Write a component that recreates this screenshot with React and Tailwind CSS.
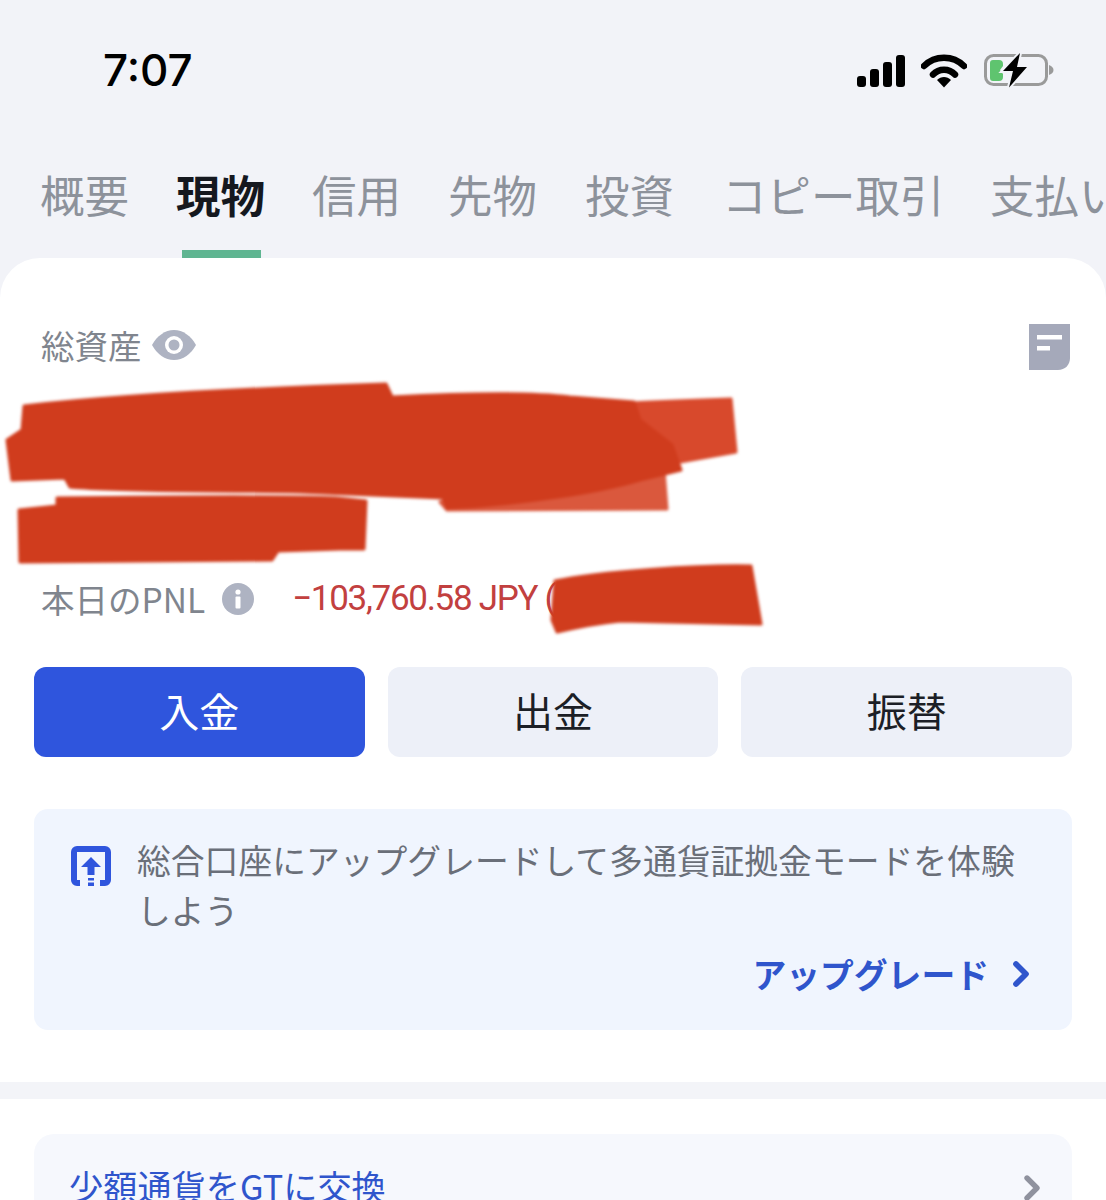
import { ChevronRight } from 'lucide-react';

const cjk = { fontFamily: '"Noto Sans CJK JP", "Noto Sans", sans-serif' };

const tabs = [
  { label: '概要', width: 'w-[88px]' },
  { label: '現物', width: 'w-[88px]', active: true },
  { label: '信用', width: 'w-[88px]' },
  { label: '先物', width: 'w-[89px]' },
  { label: '投資', width: 'w-[89px]' },
  { label: 'コピー取引', width: 'w-[220px]' },
  { label: '支払い', width: 'w-[135px]' },
];

function StatusIcons() {
  return (
    <div className="flex items-center gap-[14px]">
      <svg width="50" height="34" viewBox="0 0 50 34" fill="#000">
        <rect x="0" y="22" width="9" height="11" rx="3" />
        <rect x="13" y="15" width="9" height="18" rx="3" />
        <rect x="26" y="8" width="9" height="25" rx="3" />
        <rect x="39" y="1" width="9" height="32" rx="3" />
      </svg>
      <svg width="46" height="34" viewBox="0 0 46 34" fill="none">
        <path d="M3 12 C14 1 32 1 43 12" stroke="#000" strokeWidth="6.5" strokeLinecap="round" />
        <path d="M12 20.5 C18 14 28 14 34 20.5" stroke="#000" strokeWidth="6.5" strokeLinecap="round" />
        <path d="M16 26 C20 22 26 22 30 26 L23 33.5 Z" fill="#000" />
      </svg>
      <svg width="72" height="38" viewBox="0 0 72 38" fill="none" className="ml-[3px]">
        <rect x="1.5" y="3.5" width="61" height="29" rx="8" stroke="#9a9a9a" strokeWidth="3" />
        <path d="M65 13 C68 14 69.5 16 69.5 18 C69.5 20 68 22 65 23 Z" fill="#9a9a9a" />
        <path d="M6 11 a3 3 0 0 1 3 -3 H15 a4 4 0 0 1 4 4 V14 L16 18 L19 22 V25 a4 4 0 0 1 -4 4 H9 a3 3 0 0 1 -3 -3 Z" fill="#5fc46f" />
        <path d="M36 1 L19 19 L29 19 L25 35.5 L43 15 L33 15 Z" fill="#000" stroke="#f2f3f8" strokeWidth="4" paintOrder="stroke" />
      </svg>
    </div>
  );
}

function Redactions() {
  // marker scribbles over the private figures, in page coords minus card top
  return (
    <svg className="absolute left-0 top-0 pointer-events-none" width="1106" height="400" viewBox="0 258 1106 400" style={{ filter: 'blur(1.4px)' }}>
      <g fill="#d03c1d" stroke="#d03c1d" strokeWidth="3" strokeLinejoin="round">
        <path d="M630 403 C670 401 700 400 731 399 L736 452 L680 462 L640 470 Z" fill="#d8492c" stroke="#d8492c" />
        <path d="M440 502 L650 470 L664 470 L667 509 L447 510 Z" fill="#da583d" stroke="#da583d" />
        <path d="M24 406 C120 395 260 388 386 384 L392 397 C450 394 530 392 570 397 L634 402 L640 420 L672 445 L681 470 L640 480 C600 492 520 505 447 508 L443 498 L300 492 C220 490 120 492 70 487 L65 478 L12 480 L7 440 L22 430 Z" />
        <path d="M57 498 C150 497 280 496 336 498 L366 501 L364 549 L340 549 L278 551 L272 560 L20 562 L19 510 L57 506 Z" />
        <path d="M555 581 C600 571 700 565 751 566 L761 624 L620 621 C600 623 570 629 557 632 L552 620 Z" />
      </g>
    </svg>
  );
}

export default function App() {
  return (
    <div className="w-[1106px] h-[1200px] overflow-hidden bg-[#f2f3f8]" style={cjk}>
      {/* status bar */}
      <div className="h-[140px] flex justify-between pl-[103px] pr-[50px] pt-[45px]">
        <span className="text-[44px] leading-[50px] font-medium text-black" style={{ fontFamily: 'Inter, sans-serif' }}>7:07</span>
        <div className="pt-[7px] h-fit"><StatusIcons /></div>
      </div>

      {/* tabs */}
      <div className="h-[118px] flex gap-[48px] pl-[40px] whitespace-nowrap overflow-hidden">
        {tabs.map((t) => (
          <div key={t.label} className={`relative shrink-0 ${t.width} h-[118px] text-[44.5px] leading-[107px] ${t.active ? 'font-bold text-[#15181f]' : 'text-[#8d929b]'}`}>
            {t.label}
            {t.active && <span className="absolute left-[6px] bottom-0 w-[79px] h-[8px] bg-[#5fb591]" />}
          </div>
        ))}
      </div>

      {/* main card */}
      <div className="relative bg-white rounded-t-[40px] pt-[66px] h-[942px]">
        <div className="pl-[41px] pr-[36px] flex justify-between items-start h-[46px]">
          <div className="flex items-center gap-[10px] h-[42px]">
            <span className="text-[33.5px] leading-[42px] text-[#80858e]">総資産</span>
            <svg width="44" height="30" viewBox="0 0 44 30">
              <path d="M0 15 C5 6 13 0 22 0 C31 0 39 6 44 15 C39 24 31 30 22 30 C13 30 5 24 0 15 Z" fill="#aeb3c2" />
              <circle cx="22" cy="15" r="9" fill="#fff" />
              <circle cx="22" cy="15" r="5.5" fill="#aeb3c2" />
            </svg>
          </div>
          <svg width="41" height="46" viewBox="0 0 41 46">
            <path d="M0 0 H41 V34 C41 41 36 46 29 46 H0 Z" fill="#a5a9ba" />
            <rect x="8" y="11" width="25" height="4.5" fill="#fff" />
            <rect x="8" y="22" width="13" height="4.5" fill="#fff" />
          </svg>
        </div>

        <div className="h-[207px]" />

        <div className="flex items-center pl-[41px] h-[44px] whitespace-nowrap">
          <span className="text-[33.5px] leading-[44px] text-[#80858e]">本日のPNL</span>
          <svg className="ml-[17px]" width="32" height="32" viewBox="0 0 32 32">
            <circle cx="16" cy="16" r="16" fill="#aeb3c2" />
            <circle cx="16" cy="9" r="2.6" fill="#fff" />
            <rect x="13.5" y="13.5" width="5" height="12" rx="1" fill="#fff" />
          </svg>
          <span className="ml-[38px] text-[35px] leading-[44px] text-[#c2403f] tracking-[-1.3px]" style={{ fontFamily: 'Roboto, sans-serif' }}>−103,760.58 JPY (−</span>
        </div>

        <div className="flex gap-[23px] px-[34px] mt-[46px]">
          <button className="w-[331px] h-[90px] pb-[5px] rounded-[12px] bg-[#2f55dd] text-white text-[40px]">入金</button>
          <button className="w-[331px] h-[90px] pb-[5px] rounded-[12px] bg-[#edf0f8] text-[#1c1f26] text-[40px]">出金</button>
          <button className="w-[331px] h-[90px] pb-[5px] rounded-[12px] bg-[#edf0f8] text-[#1c1f26] text-[40px]">振替</button>
        </div>

        {/* upgrade banner */}
        <div className="mx-[34px] mt-[52px] h-[221px] rounded-[14px] bg-[#f0f5fe] pt-[26px] pl-[37px] pr-[41px]">
          <div className="flex gap-[26px]">
            <svg className="mt-[11px] shrink-0" width="40" height="40" viewBox="0 0 40 40">
              <path d="M9 37 H6 a3 3 0 0 1 -3 -3 V6 a3 3 0 0 1 3 -3 H34 a3 3 0 0 1 3 3 V34 a3 3 0 0 1 -3 3 H29" fill="none" stroke="#2f55dd" strokeWidth="6" />
              <path d="M20 11 L30 21 H23.5 V29 H16.5 V21 H10 Z" fill="#2f55dd" />
              <rect x="17" y="32" width="6" height="2.5" fill="#2f55dd" />
              <rect x="17" y="36.5" width="6" height="3.5" fill="#2f55dd" />
            </svg>
            <p className="w-[890px] text-[33.8px] leading-[50px] text-[#6a6f79]">総合口座にアップグレードして多通貨証拠金モードを体験しよう</p>
          </div>
          <div className="flex justify-end items-center mt-[14px] h-[50px]">
            <span className="text-[33.8px] leading-[50px] font-bold text-[#2f55cc]">アップグレード</span>
            <ChevronRight className="ml-[12px] -mr-[10px] text-[#2f55cc]" size={40} strokeWidth={3.4} />
          </div>
        </div>

        {/* divider */}
        <div className="mt-[52px] h-[17px] bg-[#f3f4f8]" />

        {/* small balance swap */}
        <div className="mx-[34px] mt-[35px] h-[120px] rounded-[20px] bg-[#f6f8fd] flex justify-between pl-[35px] pr-[20px] pt-[28px]">
          <span className="text-[34.2px] leading-[46px] text-[#2f55cc]">少額通貨をGTに交換</span>
          <ChevronRight className="mt-[6px] text-[#8f929e]" size={40} strokeWidth={3.2} />
        </div>

        <Redactions />
      </div>
    </div>
  );
}
